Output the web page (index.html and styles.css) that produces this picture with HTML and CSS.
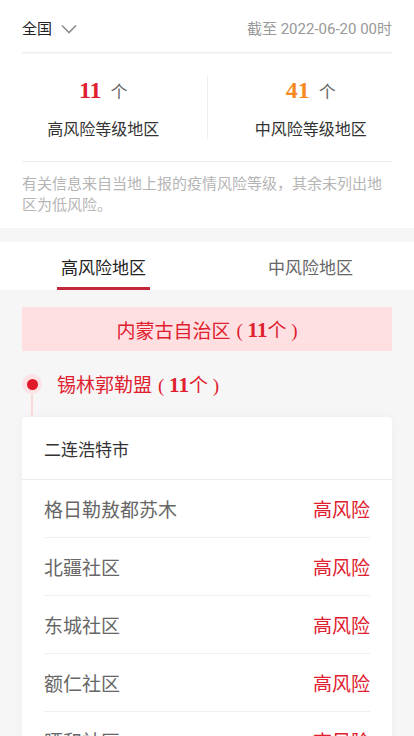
FILE: index.html
```html
<!DOCTYPE html>
<html lang="zh-CN">
<head>
    <meta charset="UTF-8">
    <meta name="viewport" content="width=device-width, initial-scale=1.0">
    <title>风险等级查询</title>
    <link rel="stylesheet" href="styles.css">
</head>
<body>
    <div class="summary">
        <div class="top-bar">
            <div class="area-pick">
                <span>全国</span>
                <svg class="arrow" viewBox="0 0 16 10" width="16" height="10">
                    <path d="M1 1.5 L8 8.5 L15 1.5" fill="none" stroke="#8c8c8c" stroke-width="1.6"/>
                </svg>
            </div>
            <div class="update-time">截至 2022-06-20 00时</div>
        </div>

        <div class="counts">
            <div class="count-item">
                <div class="count-num"><b class="high">11</b><span>个</span></div>
                <div class="count-label">高风险等级地区</div>
            </div>
            <div class="count-item">
                <div class="count-num"><b class="mid">41</b><span>个</span></div>
                <div class="count-label">中风险等级地区</div>
            </div>
        </div>

        <p class="note">有关信息来自当地上报的疫情风险等级，其余未列出地区为低风险。</p>
    </div>

    <div class="tabs">
        <div class="tab active">高风险地区</div>
        <div class="tab">中风险地区</div>
    </div>

    <div class="list-wrap">
        <div class="province">内蒙古自治区<span class="num">( <b>11</b>个 )</span></div>

        <div class="city">
            <i class="dot"></i>
            <span>锡林郭勒盟<span class="num">( <b>11</b>个 )</span></span>
        </div>

        <div class="card">
            <div class="card-title">二连浩特市</div>
            <ul class="rows">
                <li><span>格日勒敖都苏木</span><em>高风险</em></li>
                <li><span>北疆社区</span><em>高风险</em></li>
                <li><span>东城社区</span><em>高风险</em></li>
                <li><span>额仁社区</span><em>高风险</em></li>
                <li><span>晒和社区</span><em>高风险</em></li>
            </ul>
        </div>
    </div>
</body>
</html>
```

FILE: styles.css
```css
body {
    margin: 0;
    padding: 0;
    background-color: #f6f6f6;
    font-family: "Noto Sans CJK SC", sans-serif;
    color: #333;
}

/* 顶部汇总 */
.summary {
    background-color: #fff;
}

.top-bar {
    height: 53px;
    margin: 0 22px;
    display: flex;
    justify-content: space-between;
    align-items: center;
    padding-top: 3px;
    box-sizing: border-box;
    border-bottom: 1px solid #ededed;
    box-shadow: 0 1px 1px rgba(0, 0, 0, 0.03);
}

.area-pick {
    display: flex;
    align-items: center;
    gap: 9px;
    font-size: 15px;
    color: #222;
}

.arrow {
    margin-top: 2px;
}

.update-time {
    font-family: Roboto, "Noto Sans CJK SC", sans-serif;
    font-size: 15px;
    color: #999;
}

.counts {
    display: flex;
    padding: 22px 0 22px;
}

.count-item {
    flex: 1;
    display: flex;
    flex-direction: column;
    align-items: center;
}

.count-item + .count-item {
    border-left: 1px solid #eee;
}

.count-num {
    display: flex;
    align-items: baseline;
    gap: 9px;
    height: 30px;
    line-height: 30px;
}

.count-num b {
    font-family: "Liberation Serif", serif;
    font-size: 24px;
    font-weight: bold;
}

.count-num span {
    font-size: 17px;
    color: #666;
}

.high {
    color: #e0202e;
}

.mid {
    color: #f7891e;
}

.count-label {
    margin-top: 12px;
    font-size: 16px;
    line-height: 22px;
    color: #333;
}

.note {
    margin: 0 22px;
    padding: 10px 0 14px;
    border-top: 1px solid #ececec;
    font-size: 15px;
    line-height: 21px;
    color: #b5b5b5;
}

/* 切换标签 */
.tabs {
    display: flex;
    margin-top: 14px;
    background-color: #fff;
    height: 48px;
}

.tab {
    flex: 1;
    display: flex;
    justify-content: center;
    align-items: center;
    font-size: 17px;
    color: #666;
    position: relative;
}

.tab.active {
    color: #222;
}

.tab.active::after {
    content: '';
    position: absolute;
    left: 50%;
    bottom: 0;
    width: 93px;
    height: 3px;
    margin-left: -47px;
    background-color: #c3283a;
}

/* 地区列表 */
.list-wrap {
    padding: 17px 22px 0;
}

.province {
    height: 44px;
    display: flex;
    justify-content: center;
    align-items: center;
    background-color: #fee0e3;
    color: #e0202e;
    font-size: 19px;
}

.num {
    font-family: "Liberation Serif", "Noto Sans CJK SC", serif;
    margin-left: 6px;
}

.num b {
    font-size: 21px;
    font-weight: bold;
}

.city {
    display: flex;
    align-items: center;
    gap: 15px;
    height: 66px;
    color: #e0202e;
    font-size: 19px;
    position: relative;
}

.dot {
    width: 20px;
    height: 20px;
    border-radius: 50%;
    background-color: #fde3e5;
    display: flex;
    justify-content: center;
    align-items: center;
}

.dot::before {
    content: '';
    width: 11px;
    height: 11px;
    border-radius: 50%;
    background-color: #e0192b;
}

/* 竖线连接到卡片 */
.dot::after {
    content: '';
    position: absolute;
    left: 9px;
    top: 43px;
    width: 2px;
    height: 23px;
    background-color: #fcd9dc;
}

.card {
    background-color: #fff;
    border-radius: 4px;
    box-shadow: 0 0 12px rgba(0, 0, 0, 0.04);
}

.card-title {
    height: 62px;
    display: flex;
    align-items: center;
    padding: 0 22px;
    font-size: 17px;
    color: #333;
    border-bottom: 1px solid #ececec;
}

.rows {
    list-style: none;
    margin: 0;
    padding: 0 22px;
}

.rows li {
    height: 57px;
    display: flex;
    justify-content: space-between;
    align-items: center;
    font-size: 19px;
    border-bottom: 1px solid #efefef;
}

.rows span {
    color: #666;
}

.rows em {
    font-style: normal;
    color: #e0202e;
}
```
